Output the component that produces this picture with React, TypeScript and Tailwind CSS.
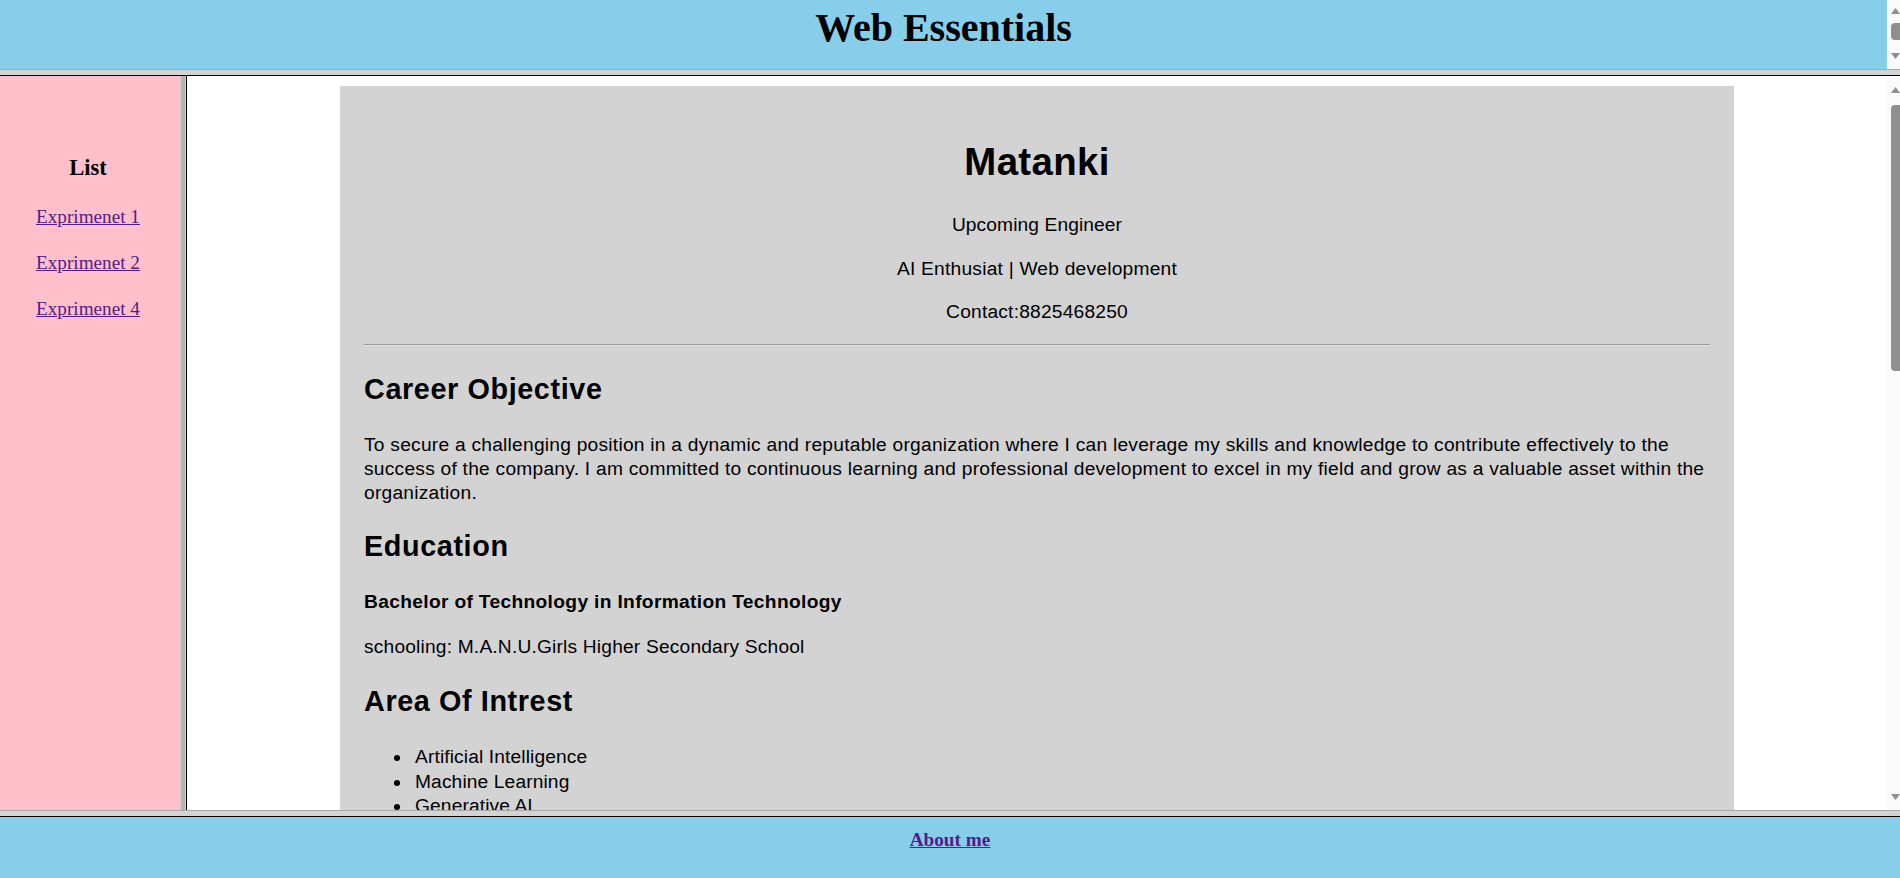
import type { ReactNode } from "react";

const serif = "font-['Liberation_Serif','Times_New_Roman',serif]";
const sans = "font-['Liberation_Sans',Arial,sans-serif]";

const ArrowUp = () => (
  <svg width="9" height="6" viewBox="0 0 9 6" className="block">
    <path d="M0 6 L4.5 0 L9 6 Z" fill="#8f8f8f" />
  </svg>
);

const ArrowDown = () => (
  <svg width="9" height="6" viewBox="0 0 9 6" className="block">
    <path d="M0 0 L9 0 L4.5 6 Z" fill="#8f8f8f" />
  </svg>
);

/** Fake classic scrollbar, matches the frame look of the old page. */
const ScrollBar = ({ thumbTop, thumbHeight, arrowTop, arrowBottom }: {
  thumbTop: number;
  thumbHeight: number;
  arrowTop: number;
  arrowBottom: number;
}) => (
  <div className="relative h-full w-[13px] shrink-0 bg-[#fafafa]">
    <div className="absolute left-[4px]" style={{ top: arrowTop }}>
      <ArrowUp />
    </div>
    <div
      className="absolute left-[4px] right-0 rounded-l-[4px] bg-[#8f8f8f]"
      style={{ top: thumbTop, height: thumbHeight }}
    />
    <div className="absolute left-[4px]" style={{ bottom: arrowBottom }}>
      <ArrowDown />
    </div>
  </div>
);

const HBorder = () => (
  <div className="shrink-0">
    <div className="h-px bg-[#a8a8a8]" />
    <div className="h-[5px] bg-[#d3d3d3]" />
    <div className="h-px bg-black" />
  </div>
);

const Section = ({ title, mt, children }: { title: string; mt: string; children?: ReactNode }) => (
  <>
    <h2 className={`${mt} text-[28.8px] font-bold leading-[34px] tracking-[0.6px]`}>{title}</h2>
    {children}
  </>
);

const navLinks = ["Exprimenet 1", "Exprimenet 2", "Exprimenet 4"];
const interests = ["Artificial Intelligence", "Machine Learning", "Generative AI"];

export default function App() {
  return (
    <div className="flex h-[878px] w-[1900px] flex-col overflow-hidden bg-white text-black">
      {/* top frame */}
      <div className="flex h-[69px] shrink-0 bg-[#87ceeb]">
        <div className="flex flex-1 justify-center pt-[5px]">
          <h1 className={`${serif} text-[40px] font-bold leading-[46px]`}>Web Essentials</h1>
        </div>
        <ScrollBar arrowTop={8} thumbTop={23} thumbHeight={17} arrowBottom={10} />
      </div>

      <HBorder />

      {/* middle frames */}
      <div className="flex h-[734px] shrink-0">
        <aside className={`${serif} w-[180px] shrink-0 bg-[#ffc0cb] pr-[4px] text-center`}>
          <h3 className="mt-[79px] text-[22.5px] font-bold leading-[26px]">List</h3>
          <div className="mt-[25px] flex flex-col gap-[24px]">
            {navLinks.map((l) => (
              <a key={l} href="#" className="text-[19.2px] leading-[22px] text-[#551a8b] underline">
                {l}
              </a>
            ))}
          </div>
        </aside>

        <div className="flex shrink-0">
          <div className="w-px bg-[#cfcfcf]" />
          <div className="w-[4px] bg-[#b5b5b5]" />
          <div className="w-px bg-[#cfcfcf]" />
          <div className="w-px bg-black" />
        </div>

        <main className={`${sans} flex-1 overflow-hidden`}>
          <div className="mx-auto mt-[10px] w-[1394px] bg-[#d3d3d3] px-[24px] pt-[24px] pb-[40px]">
            <div className="text-center">
              <h1 className="mt-[30px] text-[38.4px] font-bold leading-[44px] tracking-[0.35px]">Matanki</h1>
              <p className="mt-[29px] text-[19.2px] leading-[24px] tracking-[0.1px]">Upcoming Engineer</p>
              <p className="mt-[20px] text-[19.2px] leading-[24px] tracking-[0.22px]">
                AI Enthusiat | Web development
              </p>
              <p className="mt-[19px] text-[19.2px] leading-[24px] tracking-[0.2px]">Contact:8825468250</p>
            </div>
            <hr className="mt-[20px] h-[2px] border-0 border-t border-b border-t-[#9a9a9a] border-b-[#e4e4e4]" />

            <Section title="Career Objective" mt="mt-[26px]">
              <p className="mt-[27px] text-[19.2px] leading-[24px] tracking-[0.24px]">
                To secure a challenging position in a dynamic and reputable organization where I can leverage my
                skills and knowledge to contribute effectively to the
                <br />
                success of the company. I am committed to continuous learning and professional development to
                excel in my field and grow as a valuable asset within the
                <br />
                organization.
              </p>
            </Section>

            <Section title="Education" mt="mt-[24px]">
              <h4 className="mt-[27px] text-[19.2px] font-bold leading-[24px] tracking-[0.33px]">
                Bachelor of Technology in Information Technology
              </h4>
              <p className="mt-[21px] text-[19.2px] leading-[24px] tracking-[0.18px]">
                schooling: M.A.N.U.Girls Higher Secondary School
              </p>
            </Section>

            <Section title="Area Of Intrest" mt="mt-[25px]">
              <ul className="mt-[27px] list-disc pl-[48px] text-[19.2px] leading-[24.5px] tracking-[0.12px]">
                {interests.map((i) => (
                  <li key={i}>
                    <span className="ml-[3px]">{i}</span>
                  </li>
                ))}
              </ul>
            </Section>
          </div>
        </main>

        <ScrollBar arrowTop={11} thumbTop={29} thumbHeight={266} arrowBottom={10} />
      </div>

      <HBorder />

      {/* bottom frame */}
      <footer className={`${serif} flex h-[61px] shrink-0 justify-center bg-[#87ceeb] pt-[12px]`}>
        <a href="#" className="text-[19.2px] font-bold leading-[22px] text-[#551a8b] underline">
          About me
        </a>
      </footer>
    </div>
  );
}
